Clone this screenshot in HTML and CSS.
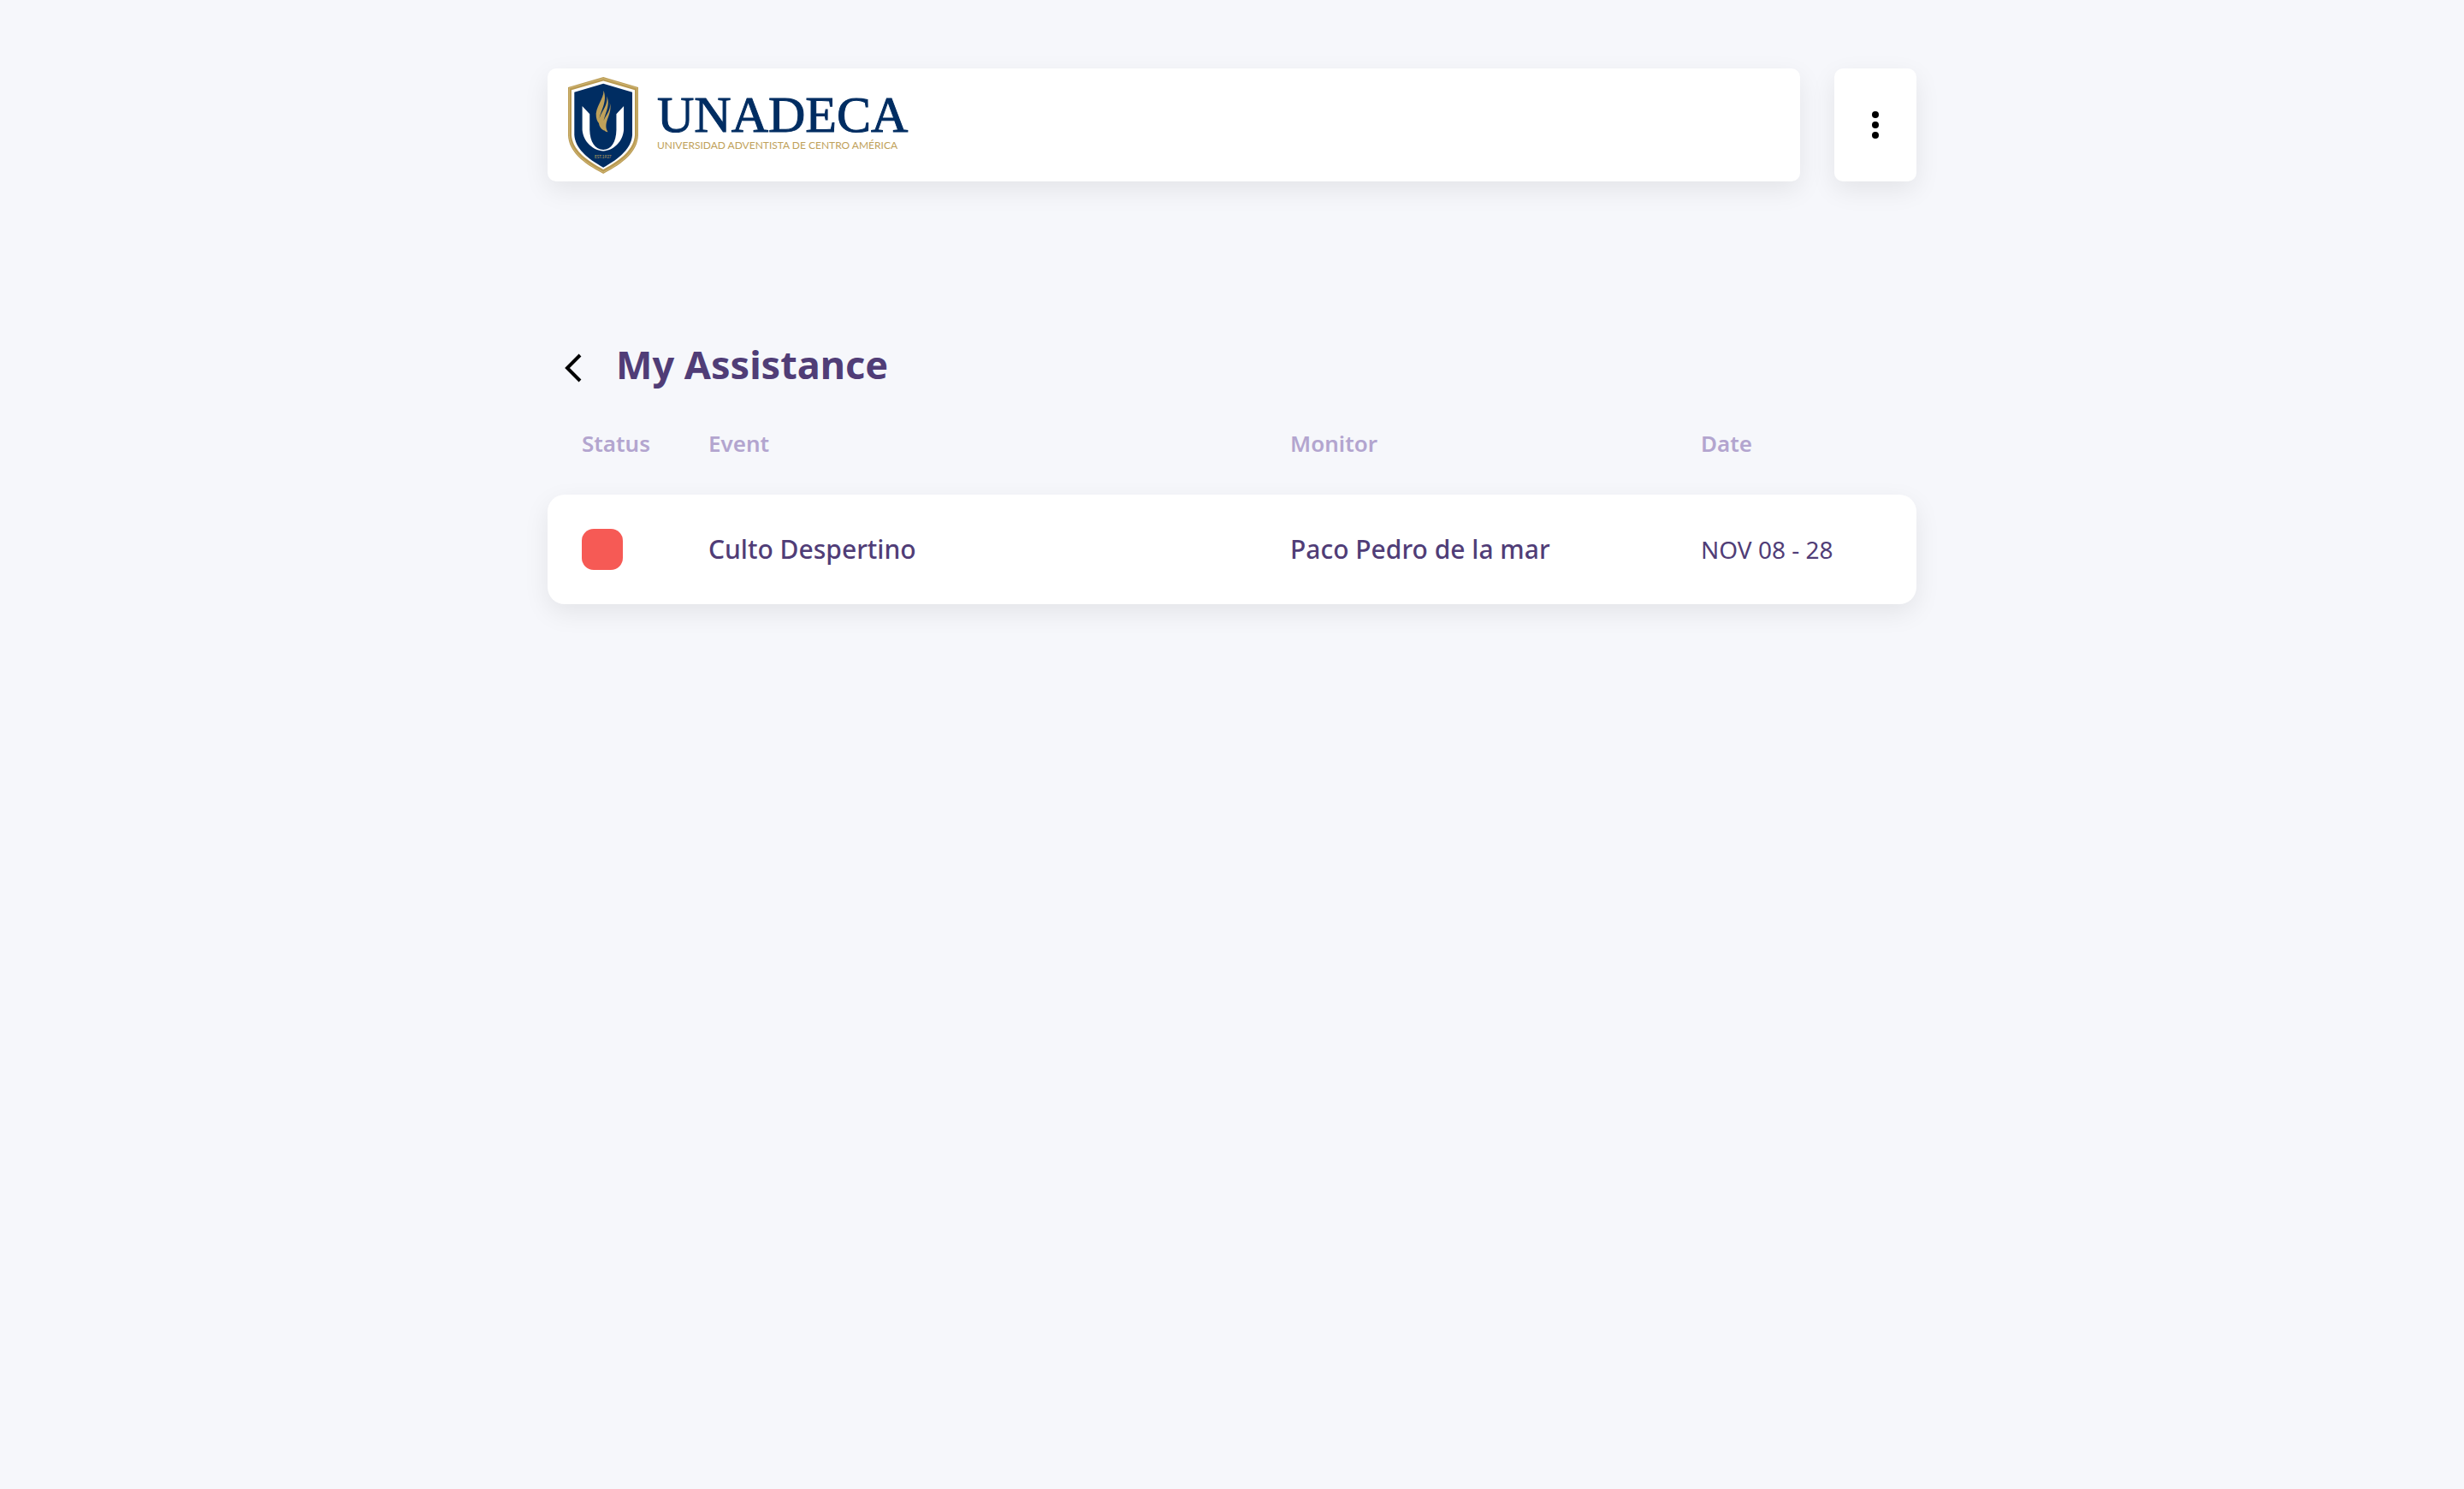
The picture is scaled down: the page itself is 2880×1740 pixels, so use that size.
FILE: index.html
```html
<!DOCTYPE html>
<html lang="en">
<head>
<meta charset="utf-8">
<meta name="viewport" content="width=device-width, initial-scale=1">
<title>My Assistance</title>
<link rel="stylesheet" href="styles.css">
</head>
<body>
<div class="page">
  <header class="topbar">
    <div class="brand">
      <svg class="shield" viewBox="43 30 247 340" aria-hidden="true">
        <path fill="#b99a52" d="M167 30 43 66V235C45 292 95 334 167 370 238 334 288 292 290 235V66Z"/>
        <path fill="none" stroke="#d2b877" stroke-width="3" d="M167 35 47 69V235C50 289 98 330 167 365 235 330 283 289 286 235V69Z"/>
        <path fill="#fff" d="M167 43 55 76V234C58 284 104 322 167 355 229 322 275 284 278 234V76Z"/>
        <path fill="#002d62" d="M167 53 65 83V233C67 279 109 316 167 348 225 316 267 279 269 233V83Z"/>
        <path fill="#fff" d="M93 132 119 160V216C120 258 138 286 167 286S212 258 213 216V160L239 132V216C236 258 201 290 167 290S96 258 93 216Z"/>
        <path fill="#bfa15a" d="M168 77C170 105 136 138 142 171 144 184 149 191 155 196 143 162 186 126 168 77ZM179 97C187 137 143 164 153 200 157 210 163 215 171 219 152 181 199 140 179 97ZM189 119C199 156 156 177 167 210 170 219 175 224 183 223 162 190 204 158 189 119Z"/>
        <text class="shield-year" x="166" y="315" text-anchor="middle">EST.1927</text>
      </svg>
      <div class="wordmark">
        <span class="wordmark-name">UNADECA</span>
        <span class="wordmark-sub">UNIVERSIDAD ADVENTISTA DE CENTRO AMÉRICA</span>
      </div>
    </div>
    <button class="menu" type="button" aria-label="Menu">
      <svg class="menu-icon" viewBox="0 0 8 32" aria-hidden="true"><circle cx="4" cy="4" r="4"/><circle cx="4" cy="16" r="4"/><circle cx="4" cy="28" r="4"/></svg>
    </button>
  </header>

  <main>
    <div class="heading">
      <button class="back" type="button" aria-label="Back">
        <svg class="back-icon" viewBox="0 0 20 34" aria-hidden="true"><path d="M18 2 3 17 18 32"/></svg>
      </button>
      <h1 class="title">My Assistance</h1>
    </div>

    <table class="records">
      <thead>
        <tr class="row row-head"><th>Status</th><th>Event</th><th>Monitor</th><th>Date</th></tr>
      </thead>
      <tbody>
        <tr class="row row-card">
          <td><span class="status" role="img" aria-label="Absent"></span></td>
          <td>Culto Despertino</td>
          <td>Paco Pedro de la mar</td>
          <td class="date">NOV 08 - 28</td>
        </tr>
      </tbody>
    </table>
  </main>
</div>
</body>
</html>
```
FILE: styles.css
```css
* {
  box-sizing: border-box;
}

body {
  margin: 0;
  background: #f6f7fb;
  color: #503d77;
  font-family: "Segoe UI", "Noto Sans", sans-serif;
}

button {
  padding: 0;
  border: 0;
  background: none;
  cursor: pointer;
}

.page {
  max-width: 1680px;
  margin: 0 auto;
  padding: 80px 40px;
}

.topbar {
  display: flex;
  gap: 40px;
}

.brand,
.menu {
  min-height: 132px;
  border-radius: 10px;
  background: #fff;
  box-shadow: 0 10px 30px rgba(0, 0, 0, 0.08);
}

.brand {
  display: flex;
  flex: 1;
  align-items: center;
  gap: 22px;
  padding: 0 24px;
}

.shield {
  width: 82px;
  height: 113px;
}

.shield-year {
  fill: #bfa15a;
  font-family: Lato, sans-serif;
  font-size: 14px;
}

.wordmark {
  display: flex;
  flex-direction: column;
}

.wordmark-name {
  color: #002d62;
  font-family: "Liberation Serif", serif;
  font-size: 60px;
  line-height: 48px;
  -webkit-text-stroke: 1px #002d62;
}

.wordmark-sub {
  color: #bfa15a;
  font-family: Lato, sans-serif;
  font-size: 12px;
  line-height: 24px;
}

.menu {
  display: flex;
  align-items: center;
  justify-content: center;
  width: 96px;
}

.menu-icon {
  width: 8px;
  height: 32px;
}

.heading {
  display: flex;
  align-items: flex-start;
  margin-top: 184px;
}

.back {
  display: flex;
  align-items: center;
  width: 80px;
  height: 68px;
  padding-left: 20px;
}

.back-icon {
  width: 20px;
  height: 34px;
  fill: none;
  stroke: #000;
  stroke-width: 4px;
}

.title {
  margin: 0;
  font-size: 45px;
  font-weight: 700;
  line-height: 60px;
}

.records,
.records thead,
.records tbody {
  display: block;
}

.row {
  display: grid;
  grid-template-columns: 148px 17fr 12fr 212px;
  align-items: center;
  padding: 0 40px;
}

.row th,
.row td {
  padding: 0;
  text-align: left;
}

.row-head {
  margin: 34px 0 40px;
  color: #b3a5cf;
  font-size: 26px;
  line-height: 40px;
}

.row-head th {
  font-weight: 600;
}

.row-card {
  min-height: 128px;
  border-radius: 20px;
  background: #fff;
  box-shadow: 0 10px 30px rgba(0, 0, 0, 0.08);
  font-size: 30px;
  font-weight: 500;
  line-height: 44px;
}

.status {
  display: block;
  width: 48px;
  height: 48px;
  border-radius: 14px;
  background: #f65a55;
}

.row .date {
  font-size: 28px;
  font-weight: 400;
}
```
